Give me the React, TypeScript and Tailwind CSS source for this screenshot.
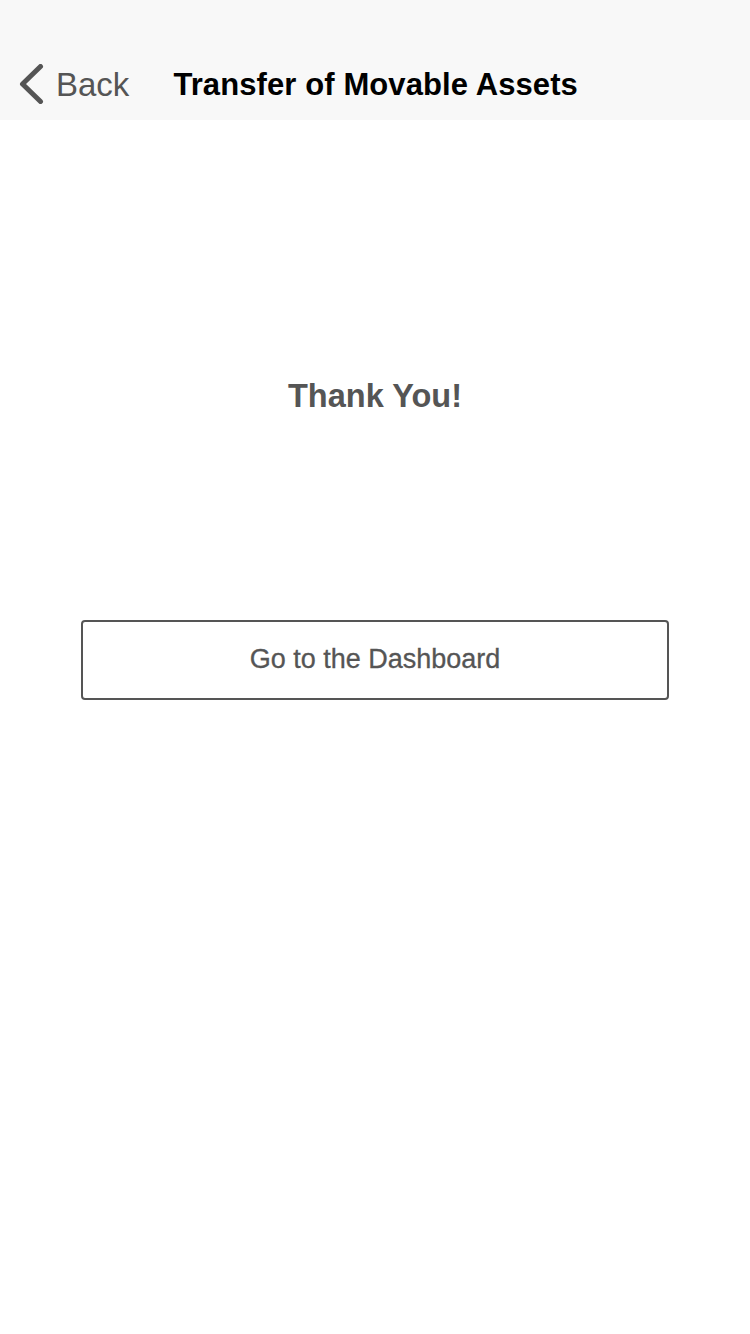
import React from "react";

const App = () => {
  return (
    <div className="min-h-[1334px] w-[750px] bg-white font-['Liberation_Sans',Arial,sans-serif]">
      <div className="h-[120px] bg-[#f8f8f8] flex items-end pb-[14px]">
        <button className="flex items-center pl-[18px] text-[#555] h-[44px]">
          <svg width="26" height="40" viewBox="0 0 26 40" fill="none">
            <path
              d="M22.5 2.5L4.5 20L22.5 37.5"
              stroke="#555"
              strokeWidth="5"
              strokeLinecap="round"
              strokeLinejoin="round"
            />
          </svg>
          <span className="ml-[12px] text-[33px] leading-none">Back</span>
        </button>
        <p className="ml-[44px] h-[44px] flex items-center text-[31px] leading-none text-black font-bold tracking-[0.1px]">
          Transfer of Movable Assets
        </p>
      </div>

      <div className="flex flex-col items-center">
        <p className="mt-[260px] text-[32.5px] leading-none text-[#555] font-bold">
          Thank You!
        </p>
        <button className="mt-[207px] w-[588px] h-[80px] border-2 border-[#555] rounded-[4px] flex items-center justify-center text-[27px] text-[#555] [-webkit-text-stroke:0.3px_#555]">
          Go to the Dashboard
        </button>
      </div>
    </div>
  );
};

export default App;
